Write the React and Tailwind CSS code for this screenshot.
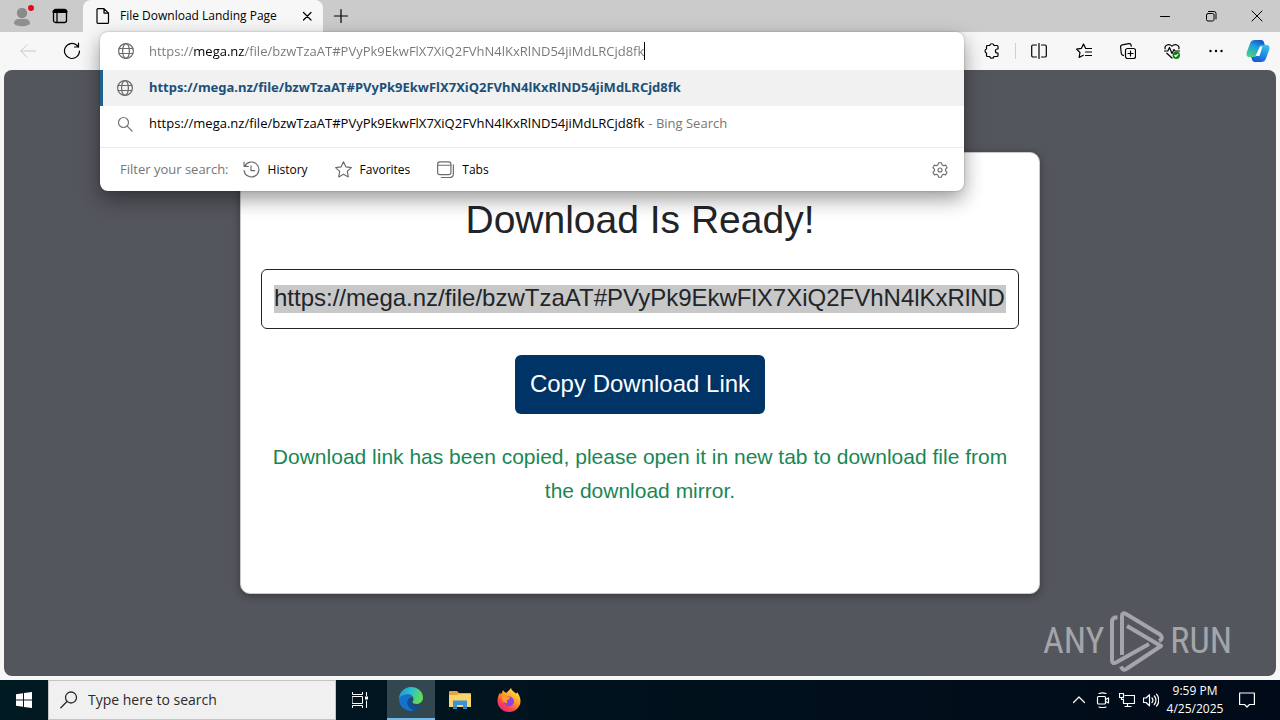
import React from "react";

const URL_TEXT = "https://mega.nz/file/bzwTzaAT#PVyPk9EkwFlX7XiQ2FVhN4lKxRlND54jiMdLRCjd8fk";

function Icon({ children, className = "size-4", box = "0 0 16 16", sw = 1 }) {
  return (
    <svg
      className={`shrink-0 ${className}`}
      viewBox={box}
      fill="none"
      stroke="currentColor"
      strokeWidth={sw}
      strokeLinecap="round"
      strokeLinejoin="round"
      aria-hidden="true"
    >
      {children}
    </svg>
  );
}

function IconButton({ label, className = "", children }) {
  return (
    <button type="button" aria-label={label} className={`flex items-center justify-center ${className}`}>
      {children}
    </button>
  );
}

function Globe() {
  return (
    <Icon className="size-4 text-[#6b6b6b]" sw={1.2}>
      <circle cx="8" cy="8" r="7.4" />
      <ellipse cx="8" cy="8" rx="3.4" ry="7.4" />
      <path d="M1.2 5.5h13.6M1.2 10.5h13.6" />
    </Icon>
  );
}

function TabStrip() {
  return (
    <header className="flex h-8 shrink-0 items-stretch bg-[#cbcbcb]">
      <IconButton label="Profile" className="w-11">
        <svg className="h-6 w-6" viewBox="0 0 24 24" aria-hidden="true">
          <circle cx="12" cy="9" r="5.200" fill="#8a8a8a" />
          <path d="M4 19.500c0-3 2-4.500 4-4.500h8c2 0 4 1.500 4 4.500-2 3.500-14 3.500-16 0z" fill="#8f8f8f" />
          <circle cx="21" cy="4" r="3" fill="#e00b1c" />
        </svg>
      </IconButton>
      <IconButton label="Tab actions menu" className="w-8">
        <Icon className="size-4" sw={1.3}>
          <rect x="1.500" y="1.500" width="13" height="13" rx="2" />
          <path d="M2 3.500h12" strokeWidth="3" />
          <path d="M5 4v10" />
        </Icon>
      </IconButton>
      <div className="ml-[7px] flex w-60 items-center rounded-t-lg bg-[#f7f7f7] pr-2 pl-3">
        <Icon className="size-4" sw={1.2}>
          <path d="M3 .6h6l4.500 4.500v9.300a1 1 0 0 1-1 1H3a1 1 0 0 1-1-1V1.600a1 1 0 0 1 1-1zM9 .6v4.500h4.500" />
        </Icon>
        <span className="ml-[9px] grow text-xs whitespace-nowrap">File Download Landing Page</span>
        <IconButton label="Close tab" className="size-4">
          <Icon className="size-4" sw={1.2}>
            <path d="M4.500 4.500l7.500 7.500M12 4.500l-7.500 7.500" />
          </Icon>
        </IconButton>
      </div>
      <IconButton label="New tab" className="w-9">
        <Icon className="size-4" sw={1.2}>
          <path d="M8 1.500v13M1.500 8h13" />
        </Icon>
      </IconButton>
      <div className="ml-auto flex">
        <IconButton label="Minimize" className="w-[46px]">
          <Icon className="size-4"><path d="M3.500 8.500h9" /></Icon>
        </IconButton>
        <IconButton label="Restore" className="w-[46px]">
          <Icon className="size-4">
            <rect x="3.500" y="5.500" width="7.500" height="7.500" rx="1.500" />
            <path d="M5.500 3.500h5.500a2 2 0 0 1 2 2v5.500" />
          </Icon>
        </IconButton>
        <IconButton label="Close" className="w-[46px]">
          <Icon className="size-4"><path d="M3 3l10 10M13 3L3 13" /></Icon>
        </IconButton>
      </div>
    </header>
  );
}

function FilterButton({ label, children }) {
  return (
    <button type="button" className="flex items-center gap-2 text-xs">
      {children}
      {label}
    </button>
  );
}

function Omnibox() {
  return (
    <form
      className="absolute inset-x-0 top-0 z-10 overflow-hidden rounded-lg bg-white shadow-[0_8px_20px_rgba(0,0,0,0.4),0_0_2px_rgba(0,0,0,0.3)]"
      onSubmit={(e) => e.preventDefault()}
    >
      <label className="flex h-[38px] items-center pl-[18px]">
        <Globe />
        <input
          type="text"
          aria-label="Address and search bar"
          defaultValue={URL_TEXT}
          className="ml-[15px] field-sizing-content bg-[linear-gradient(90deg,#767676_45px,#000_45px,#000_96px,#767676_96px)] bg-clip-text p-0 pt-px text-[13px] text-transparent outline-none"
        />
        <span className="h-[18px] w-px bg-black" />
      </label>
      <ul className="pb-[5px]">
        <li>
          <a href={URL_TEXT} className="flex h-9 items-center border-l-[3px] border-[#1f618d] bg-[#f1f1f1] pl-[14px] font-['Noto_Sans',sans-serif] text-[13px] font-bold text-[#1c5078]">
            <Globe />
            <span className="ml-4">{URL_TEXT}</span>
          </a>
        </li>
        <li>
          <a href="#search" className="flex h-9 items-center pl-[17px] text-[13px]">
            <Icon className="size-4 text-[#767676]" sw={1.2}>
              <circle cx="6.500" cy="6.500" r="5" />
              <path d="M10.200 10.200l4.800 4.800" />
            </Icon>
            <span className="ml-4">{URL_TEXT}</span>
            <span className="ml-1 text-[#767676]">- Bing Search</span>
          </a>
        </li>
      </ul>
      <div className="flex h-11 items-center border-t border-[#ebebeb] pr-4 pl-5">
        <span className="mr-[14px] text-[13px] text-[#767676]">Filter your search:</span>
        <div className="flex gap-[27px]">
          <FilterButton label="History">
            <Icon className="size-[17px] text-[#6b6b6b]" sw={1.1}>
              <path d="M1 1v4h4M1.600 5A7 7 0 1 1 1 9M7.500 4.500v4.500h3.500" />
            </Icon>
          </FilterButton>
          <FilterButton label="Favorites">
            <Icon className="size-[17px] text-[#6b6b6b]" sw={1.1}>
              <path d="M8 .8l2.200 4.700 5.200.7-3.800 3.600.9 5.200L8 12.500 3.500 15l.9-5.200L.6 6.200l5.200-.7z" />
            </Icon>
          </FilterButton>
          <FilterButton label="Tabs">
            <Icon className="size-[17px] text-[#6b6b6b]" sw={1.1}>
              <rect x=".6" y=".8" width="12.500" height="12" rx="2" />
              <path d="M.6 4h12.500M15.400 3.500v9a3 3 0 0 1-3 3H4" />
            </Icon>
          </FilterButton>
        </div>
        <IconButton label="Search settings" className="ml-auto">
          <Icon className="size-4 text-[#6b6b6b]" sw={1.1}>
            <path d="M6.500.8h3l.5 2 1.500.9 2.100-.6 1.500 2.600-1.500 1.500v1.600l1.500 1.500-1.500 2.600-2.100-.6-1.500.9-.5 2h-3l-.5-2-1.500-.9-2.100.6-1.500-2.600 1.500-1.500V7.200L.9 5.700l1.500-2.600 2.100.6L6 2.800z" />
            <circle cx="8" cy="8" r="2" />
          </Icon>
        </IconButton>
      </div>
    </form>
  );
}

function Toolbar() {
  return (
    <nav className="flex h-[38px] shrink-0 items-stretch bg-[#f7f7f7]" aria-label="Browser toolbar">
      <IconButton label="Back" className="ml-1 w-12 text-[#c8c8c8]">
        <Icon className="size-4"><path d="M15.500 8H.8M7 1.800L.8 8 7 14.200" /></Icon>
      </IconButton>
      <IconButton label="Refresh" className="w-10">
        <Icon className="size-[18px]" box="0 0 18 18" sw={1.2}>
          <path d="M16.500 9a7.500 7.500 0 1 1-2.600-5.700L15.500 5M15.500 1v4h-4" />
        </Icon>
      </IconButton>
      <div className="relative ml-2 grow">
        <Omnibox />
      </div>
      <div className="flex items-center pl-[5px]">
        <IconButton label="Extensions" className="h-full w-[46px]">
          <Icon className="size-4" sw={1.2}>
            <path d="M3.500 2.500h2.200a2.200 2.200 0 0 1 4.300 0h3a1 1 0 0 1 1 1V6h-.6a2 2 0 0 0 0 4h.6v2.500a1 1 0 0 1-1 1h-3a2.200 2.200 0 0 1-4.300 0H3.500a1 1 0 0 1-1-1V10a2.100 2.100 0 0 1 0-4V3.500a1 1 0 0 1 1-1z" />
          </Icon>
        </IconButton>
        <span className="h-4 w-px bg-[#cfcfcf]" />
        <IconButton label="Split screen" className="h-full w-[46px]">
          <Icon className="size-4" sw={1.2}>
            <path d="M5.500 2h-3.500a1.300 1.300 0 0 0-1.300 1.300v9.400a1.300 1.300 0 0 0 1.300 1.300h3.500M10.500 2h3.500a1.300 1.300 0 0 1 1.300 1.300v9.400a1.300 1.300 0 0 1-1.300 1.300h-3.500M8 .5v15" />
          </Icon>
        </IconButton>
        <IconButton label="Favorites" className="h-full w-11">
          <Icon className="size-4" sw={1.2}>
            <path d="M15.500 5.500H9.700L7.500 1 5.300 5.400.5 6.100 4 9.500l-.9 5 4.200-2.300M9.500 9h6M9.500 12.500h6" />
          </Icon>
        </IconButton>
        <IconButton label="Collections" className="h-full w-11">
          <Icon className="size-4" sw={1.2}>
            <rect x="5.500" y="5.500" width="10" height="10" rx="2" />
            <path d="M10.500 8v5M8 10.500h5M3.500 12.500l-1.200-.6a2 2 0 0 1-1-1.400L.6 4a2 2 0 0 1 1.600-2.200L8.800.6a2 2 0 0 1 2.300 1.600l.1 1" />
          </Icon>
        </IconButton>
        <IconButton label="Browser essentials" className="h-full w-11">
          <Icon className="size-4" sw={1.2}>
            <path d="M1.200 5.800C0 2 5 .2 8 3.200c3-3 8-1.200 6.800 2.600M2.800 10.200L8 15M.5 8h3.300l1.700-3.500 2.500 6 2-4 1 1.500h4.500" />
            <circle cx="12.300" cy="12.300" r="3.700" fill="#107c10" stroke="none" />
            <path d="M10.800 12.500l1 1 2-2.200" stroke="#fff" />
          </Icon>
        </IconButton>
        <IconButton label="Settings and more" className="h-full w-11">
          <Icon className="size-4">
            <g fill="currentColor" stroke="none">
              <circle cx="2.500" cy="8" r="1.200" /><circle cx="8" cy="8" r="1.200" /><circle cx="13.500" cy="8" r="1.200" />
            </g>
          </Icon>
        </IconButton>
        <IconButton label="Copilot" className="h-full w-[42px] pr-[2px]">
          <svg className="size-6" viewBox="0 0 24 24" aria-hidden="true">
            <defs>
              <linearGradient id="cpA" x1="0.700" y1="0" x2="0.200" y2="1">
                <stop offset="0" stopColor="#1455c8" /><stop offset=".4" stopColor="#1f9fdc" /><stop offset="1" stopColor="#4fd07a" />
              </linearGradient>
              <linearGradient id="cpB" x1="0.700" y1="0" x2="0.300" y2="1">
                <stop offset="0" stopColor="#35bdf0" /><stop offset="1" stopColor="#1558d6" />
              </linearGradient>
            </defs>
            <path d="M9 1h6c2 0 2.600 1.200 3.200 3l.8 2.500h-3c-1.500 0-2.300 1-2.800 2.500L11 16c-.5 1.500-1.500 2-3 2H3.500C.8 18 0 16 .7 13.500L4 4.500C4.800 2 6.500 1 9 1z" fill="url(#cpA)" />
            <path d="M15 23H9c-2 0-2.600-1.200-3.200-3L5.200 18h2.600c1.500 0 2.500-.7 3-2.200L13 8.500C13.500 7 14.300 6 16 6h4.500c2.700 0 3.500 2 2.800 4.500L20 19.500c-.8 2.500-2.500 3.500-5 3.500z" fill="url(#cpB)" />
            <path d="M14 7.500h2.500l-3 9.500h-4z" fill="#fff" />
          </svg>
        </IconButton>
      </div>
    </nav>
  );
}

function Watermark() {
  return (
    <div className="absolute right-[44px] bottom-1 flex items-center gap-[5px] font-['Roboto_Condensed','Liberation_Sans_Narrow','DejaVu_Sans_Condensed',sans-serif] text-[36px] leading-none text-[#a3a5a9]">
      <span>ANY</span>
      <svg className="h-[62px] w-[56px]" viewBox="0 0 56 62" fill="none" stroke="#a3a5a9" strokeWidth="4" strokeLinejoin="round" aria-hidden="true">
        <path d="M8.500 7.500H5.500Q3 9 3 12V50q0 4.500 4 2.500L40 34" />
        <path d="M13 45V6q0-4 4-2l34 20.500q4 4-1 6.500" />
        <path d="M18 16l34 20L18 58.500q-4 3-6-2" />
      </svg>
      <span>RUN</span>
    </div>
  );
}

function Page() {
  return (
    <main className="relative mx-1 mb-1 flex grow items-center justify-center rounded-lg bg-[#54565d] font-['Liberation_Sans',Arial,sans-serif] text-[#212529]">
      <section className="flex min-h-[442px] w-full max-w-[800px] flex-col items-center rounded-[10px] border border-[#c8c9cb] bg-white px-5 pt-[43px] text-center shadow-[0_2px_8px_rgba(0,0,0,0.35)]">
        <h1 className="text-[39px] leading-[48px]">Download Is Ready!</h1>
        <label className="mt-[25px] flex h-[60px] w-full items-center rounded-md border border-[#212529] px-3">
          <input
            type="text"
            readOnly
            aria-label="Download link"
            value={URL_TEXT}
            className="h-7 w-full min-w-0 bg-[#c8c8c8] p-0 pb-[2px] text-2xl leading-[26px] outline-none"
          />
        </label>
        <button type="button" className="mt-[26px] h-[59px] rounded-md bg-[#003366] px-[15px] pb-[2px] text-2xl text-white">
          Copy Download Link
        </button>
        <p className="mt-[26px] text-[21px] leading-[34px] text-[#198754]">
          Download link has been copied, please open it in new tab to download file from the download mirror.
        </p>
      </section>
      <Watermark />
    </main>
  );
}

function Taskbar() {
  return (
    <footer className="flex h-10 shrink-0 items-stretch bg-linear-to-r from-[#001a22] to-[#010a18] text-white">
      <IconButton label="Start" className="w-12">
        <svg className="size-4" viewBox="0 0 16 16" fill="#fff" aria-hidden="true">
          <path d="M0 2.200L7 1.200v6.300H0zM8 1.100L16 0v7.500H8zM0 8.500h7v6.300l-7-1zM8 8.500h8V16l-8-1.100z" />
        </svg>
      </IconButton>
      <label className="flex w-72 items-center border border-[#c4c4c4] bg-[#f0f0f0] pl-[11px] text-[#2b2b2b]">
        <Icon className="size-[18px]" box="0 0 18 18" sw={1.3}>
          <circle cx="11" cy="6.500" r="5.500" />
          <path d="M7 10.500L.8 16.800" />
        </Icon>
        <input
          type="text"
          aria-label="Search"
          placeholder="Type here to search"
          className="ml-[10px] w-full min-w-0 bg-transparent p-0 text-sm outline-none placeholder:text-[#2b2b2b]"
        />
      </label>
      <IconButton label="Task View" className="ml-px w-[50px] pr-1">
        <Icon className="size-4">
          <path d="M.5.5v2h10v-2M.5 15.500v-2h10v2M.5 4.500h10v7H.5zM14.500.5v3M14.500 9v6.500" />
          <rect x="13" y="4.500" width="3" height="3" fill="#fff" stroke="none" />
        </Icon>
      </IconButton>
      <IconButton label="Microsoft Edge" className="w-12 border-b-2 border-[#76b9ed] bg-[#33474e]">
        <svg className="size-6" viewBox="0 0 24 24" aria-hidden="true">
          <defs>
            <linearGradient id="edA" x1="0" y1="0" x2="1" y2="0.300">
              <stop offset="0" stopColor="#1b8fdc" /><stop offset=".5" stopColor="#2bbfd0" /><stop offset="1" stopColor="#5fdc5a" />
            </linearGradient>
          </defs>
          <path d="M0 12C0 5 5.500 0 12 0s12 4.500 12 10.500c0 4-3 6.500-6.500 6.500-2.500 0-4-1-4-2 0-.8 1-1.300 1-3 0-2.500-2.500-4.500-5.500-4.500C5 7.500 1.500 9.500 0 12z" fill="url(#edA)" />
          <path d="M0 12c1.500-3.500 5-4.500 9-4.500 2.800 0 5 1.600 5.400 3.500C12.500 9.500 8.500 11.500 8.500 15.500c0 4 3.500 7.500 7.500 8C8 25.500 0 20.500 0 12z" fill="#1272cc" />
          <path d="M8.500 14.500c-.3 4.500 3 8 7 8.800 3-.8 5.500-2.600 7-5.300-4 2-9 1-10.500-2-.8-1.600-.3-3.500.5-4.500-2 0-3.800 1.300-4 3z" fill="#0c4f9e" />
        </svg>
      </IconButton>
      <IconButton label="File Explorer" className="w-[49px]">
        <svg className="h-5 w-[22px]" viewBox="0 0 22 20" aria-hidden="true">
          <path d="M0 2a1 1 0 0 1 1-1h7l2 2h11a1 1 0 0 1 1 1v4H0z" fill="#e8a33d" />
          <path d="M0 5h8l2-1h12v13H0z" fill="#fbd56b" />
          <path d="M4 10.500h14V19h-4v-4H8v4H4z" fill="#3d93cf" />
          <path d="M4 17h4v1H4zM14 17h4v1h-4z" fill="#2f6fa8" />
        </svg>
      </IconButton>
      <IconButton label="Firefox" className="w-[49px]">
        <svg className="size-6" viewBox="0 0 24 24" aria-hidden="true">
          <defs>
            <linearGradient id="fx" x1="0.850" y1="0" x2="0.200" y2="1">
              <stop offset="0" stopColor="#fff04a" /><stop offset=".45" stopColor="#ff9a25" /><stop offset=".75" stopColor="#ff4050" /><stop offset="1" stopColor="#e0228a" />
            </linearGradient>
          </defs>
          <path d="M14 0c.5 2.500 3 3.500 5 5.500 1-.3 1-1 1-1.500 2 2.500 3.500 5.500 3.500 9C23.500 19 18.500 24 12 24S.5 19 .5 13c0-3.500 1-6 2.500-8.500.2.800.4 1.300.8 1.800C4.800 5 5.500 4 6 2c.8 1.500 1.800 2.500 3.500 2.800C11 3 12.500 2 14 0z" fill="url(#fx)" />
          <circle cx="12" cy="13.500" r="5" fill="#8a45e0" />
          <path d="M4.500 9c2-1.500 4-1.300 5.500-.2 1 .5 3 .2 3 1.200 0 1.200-2.500 1.500-3 2.500-.5 1 0 2 .8 2.500-3 .5-5.800-2-6.300-6z" fill="#ff9a25" />
        </svg>
      </IconButton>
      <div className="ml-auto flex items-center pr-[21px]">
        <IconButton label="Show hidden icons" className="w-6">
          <Icon className="size-4" sw={1.2}><path d="M2.500 10.500L8 5l5.500 5.500" /></Icon>
        </IconButton>
        <IconButton label="Meet Now" className="w-6">
          <Icon className="size-4" sw={1.2}>
            <rect x="2.500" y="4.500" width="8" height="7.500" rx="1" />
            <path d="M10.500 7.500l3-1.500v5l-3-1.500M4 1.500q3.500-1.200 7 0M4 15q3.500 1.200 7 0" />
          </Icon>
        </IconButton>
        <IconButton label="Network" className="w-6">
          <Icon className="size-4" sw={1.2}>
            <path d="M6 3.500h9.500v8H4.500V7M8.500 11.500v3M6 14.500h6M.5 1.500h4v4H.5zM2.500 5.500V7.500h2" />
          </Icon>
        </IconButton>
        <IconButton label="Volume" className="w-6">
          <Icon className="size-4" sw={1.2}>
            <path d="M.5 6v4.500H3l3.500 3.300V2.700L3 6zM9 6a3.500 3.500 0 0 1 0 4.500M11.300 4a6.300 6.300 0 0 1 0 8.500M13.500 2.200a9 9 0 0 1 0 12" />
          </Icon>
        </IconButton>
        <button type="button" className="w-16 text-center text-xs leading-[18px] whitespace-nowrap">
          9:59 PM
          <br />
          4/25/2025
        </button>
        <IconButton label="Notifications" className="ml-2 w-6">
          <Icon className="size-4" sw={1.2}>
            <path d="M.6 1h14.800v11.500H10.500L8 15l-2.500-2.500H.6z" />
          </Icon>
        </IconButton>
      </div>
    </footer>
  );
}

export default function App() {
  return (
    <div className="flex min-h-screen flex-col bg-[#f7f7f7] font-['Open_Sans','Noto_Sans',sans-serif] text-black">
      <TabStrip />
      <Toolbar />
      <Page />
      <Taskbar />
    </div>
  );
}
